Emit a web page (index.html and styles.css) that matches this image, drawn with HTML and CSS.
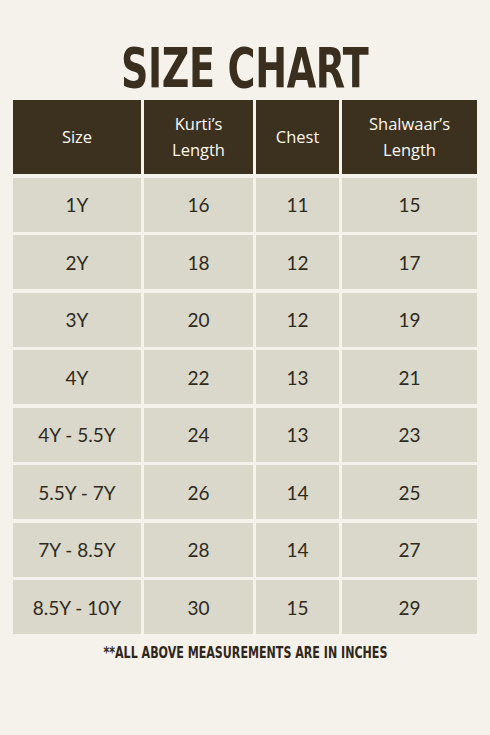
FILE: index.html
```html
<!DOCTYPE html>
<html lang="en">
<head>
<meta charset="utf-8">
<title>Size Chart</title>
<link rel="stylesheet" href="styles.css">
</head>
<body>
<main class="page">
  <h1 class="title">SIZE CHART</h1>
  <div class="chart">
    <div class="cell head">Size</div>
    <div class="cell head">Kurti’s<br>Length</div>
    <div class="cell head">Chest</div>
    <div class="cell head">Shalwaar’s<br>Length</div>

    <div class="cell">1Y</div><div class="cell">16</div><div class="cell">11</div><div class="cell">15</div>
    <div class="cell">2Y</div><div class="cell">18</div><div class="cell">12</div><div class="cell">17</div>
    <div class="cell">3Y</div><div class="cell">20</div><div class="cell">12</div><div class="cell">19</div>
    <div class="cell">4Y</div><div class="cell">22</div><div class="cell">13</div><div class="cell">21</div>
    <div class="cell">4Y - 5.5Y</div><div class="cell">24</div><div class="cell">13</div><div class="cell">23</div>
    <div class="cell">5.5Y - 7Y</div><div class="cell">26</div><div class="cell">14</div><div class="cell">25</div>
    <div class="cell">7Y - 8.5Y</div><div class="cell">28</div><div class="cell">14</div><div class="cell">27</div>
    <div class="cell">8.5Y - 10Y</div><div class="cell">30</div><div class="cell">15</div><div class="cell">29</div>
  </div>
  <p class="note">**ALL ABOVE MEASUREMENTS ARE IN INCHES</p>
</main>
</body>
</html>
```

FILE: styles.css
```css
html, body {
  margin: 0;
  padding: 0;
  background: #f5f2eb;
}

.page {
  width: 490px;
  height: 735px;
  box-sizing: border-box;
  padding: 41px 13px 0 13px;
  display: flex;
  flex-direction: column;
  align-items: center;
}

.title {
  margin: 0;
  font-family: "DejaVu Sans Condensed", "DejaVu Sans", sans-serif;
  font-weight: 700;
  font-size: 55px;
  line-height: 55px;
  color: #3a2f1f;
  letter-spacing: -0.5px;
  transform: scaleX(0.77);
}

.chart {
  margin-top: 4px;
  display: grid;
  grid-template-columns: 128px 109px 83px 135px;
  grid-template-rows: 74px repeat(8, 54px);
  column-gap: 3px;
  row-gap: 3.5px;
  width: 464px;
}

.cell {
  display: flex;
  align-items: center;
  justify-content: center;
  text-align: center;
  background: #dad8ca;
  color: #2f2a20;
  font-family: Lato, "Noto Sans", sans-serif;
  font-size: 19px;
}

.head {
  background: #3c301e;
  color: #fbf8f0;
  font-family: "Open Sans", sans-serif;
  font-size: 16.5px;
  line-height: 26px;
}

.note {
  margin: 11px 0 0 0;
  font-family: "DejaVu Sans Condensed", "DejaVu Sans", sans-serif;
  font-weight: 700;
  font-size: 16px;
  line-height: 16px;
  color: #2f271b;
  transform: scaleX(0.77);
}
```
